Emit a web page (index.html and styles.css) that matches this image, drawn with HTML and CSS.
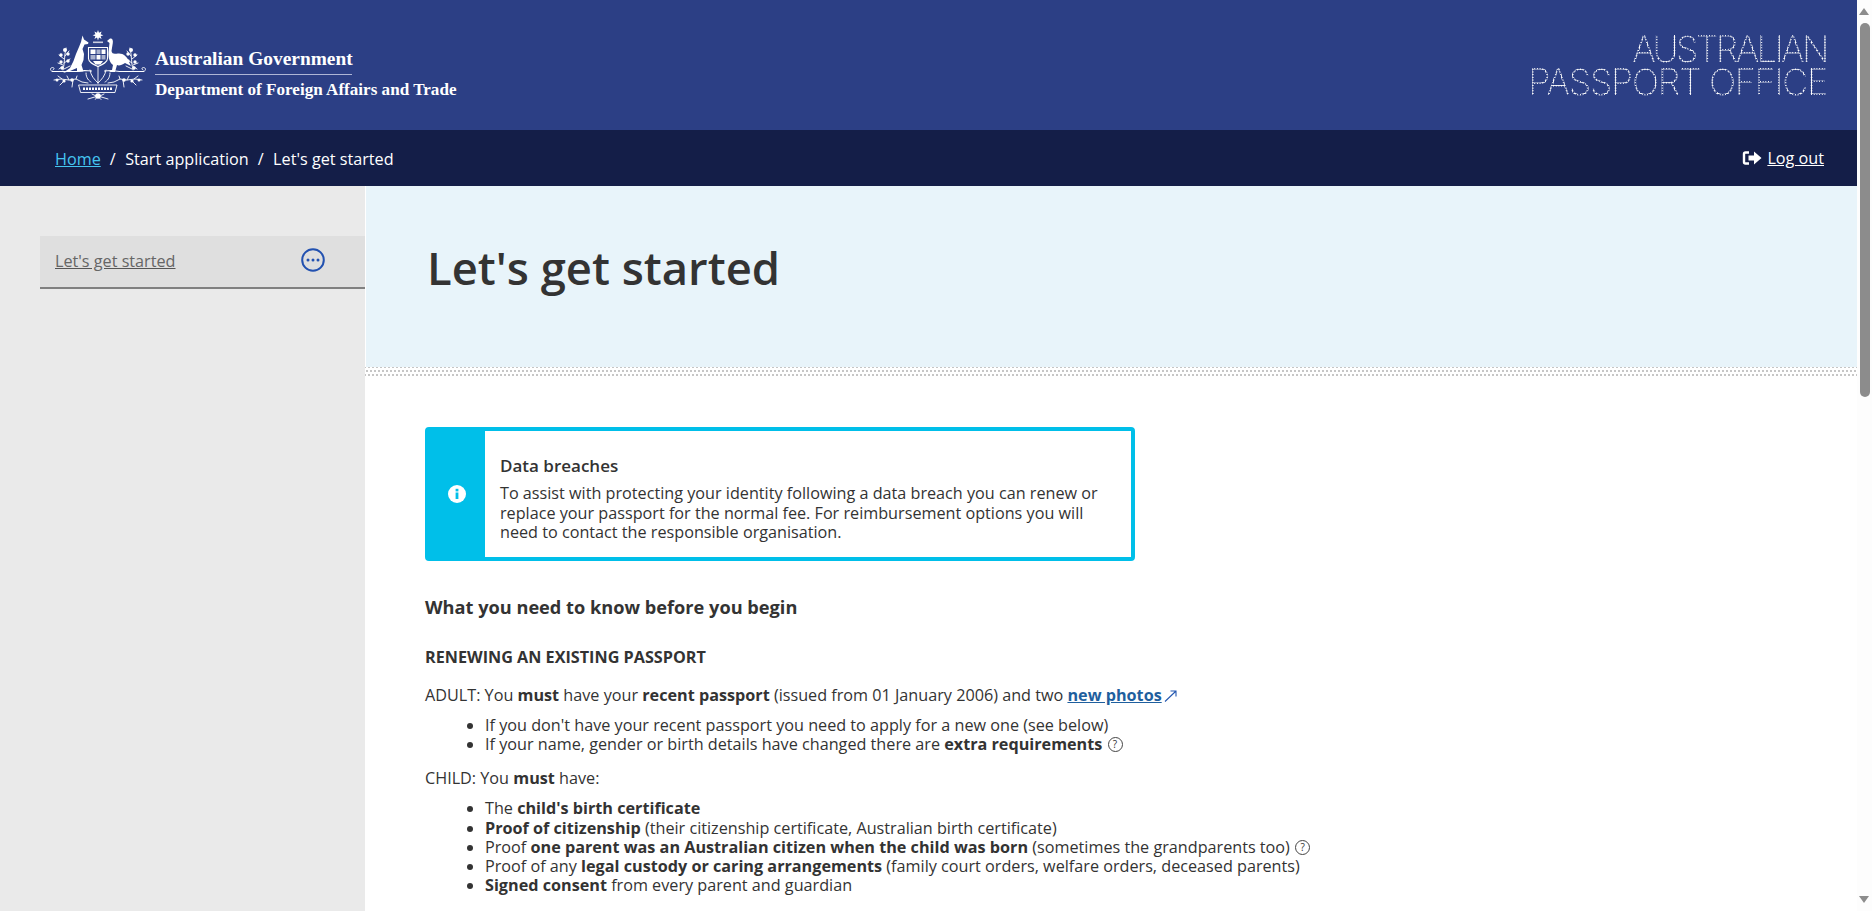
FILE: index.html
```html
<!DOCTYPE html>
<html lang="en">
<head>
<meta charset="utf-8">
<title>Let's get started - Australian Passport Office</title>
<link rel="stylesheet" href="styles.css">
</head>
<body>
<header class="masthead">
  <div class="brand">
    <svg class="crest" viewBox="0 0 96 70" width="96" height="70" aria-hidden="true">
      <g fill="#fff">
        <path d="M48 0l1 2.800 2.600-1.400-1 2.800 2.800 1-2.800 1 1 2.800L49 7.600 48 10.400 47 7.600l-2.600 1.400 1-2.800-2.800-1 2.800-1-1-2.800L47 2.800z"/>
        <rect x="43" y="11.500" width="10" height="1.600" opacity=".75"/>
        <path d="M32.500 5.500L34 9.500l4.500 3-.5 1.500-3.500.5-2 4.500 1.500 5-.5 6-2 5 2 6.500-6.500.5V38l-7 3-7 2 7-5 3.500-7 2.500-7 3-7 2-5z"/>
        <path d="M57 11l3-2.500c2.200-.5 3.300 1.500 2.800 4.500l-1.300 8c.5 3 2.500 3 6.500 2.500 5-.5 9 2.500 11 8.500l2 4-6-3c-3 2-6 3-8 2l-2 7h-6l3-2 1-5c-3-2-5-7-4.500-13l1-9z"/>
        <path d="M38.500 17.500h19v11c0 4-5 6-9.500 8-4.500-2-9.500-4-9.500-8z" fill="#2c3f85" stroke="#fff" stroke-width="1.100"/>
        <rect x="40.500" y="19.500" width="5" height="4.500"/><rect x="46.500" y="19.500" width="4" height="4.500" opacity=".6"/><rect x="51.500" y="19.500" width="4" height="4.500"/>
        <rect x="40.500" y="25" width="5" height="4.500" opacity=".6"/><rect x="46.500" y="25" width="4" height="4.500"/><rect x="51.500" y="25" width="4" height="4.500" opacity=".6"/>
        <path d="M43 31h10l-2.500 3.500h-5z"/>
      </g>
      <g fill="none" stroke="#fff" stroke-width=".9" stroke-linecap="round">
        <path d="M2.500 41.500h24l8-1 7 .5M93.500 41.500h-24l-8-1-7 .5" stroke-width="1.200"/>
        <path d="M2.500 41.500c-3-.5-2.500-4 0-4 2 0 2 2 .5 2.500M93.500 41.500c3-.5 2.500-4 0-4-2 0-2 2-.5 2.500"/>
        <path d="M48 36v17M40 40c1 6 4 9 8 13M56 40c-1 6-4 9-8 13M36 43c0 5 3 8 5 9M60 43c0 5-3 8-5 9"/>
        <path d="M4 50l7-1 8 1 7-1 6 3 6 1M92 50l-7-1-8 1-7-1-6 3-6 1"/>
        <path d="M8 46l4 3M10 55l5-5M17 46l2 4M22 57l1-7M27 46l-1 3M88 46l-4 3M86 55l-5-5M79 46l-2 4M74 57l-1-7M69 46l1 3"/>
        <path d="M13 40c2-7 1-14 3-22M9 25l5 4M19 21l-4 5M8 33l5 2M20 29l-6 4M9 39l4-3M20 36l-6 3"/>
        <path d="M83 40c-2-7-1-14-3-22M87 25l-5 4M77 21l4 5M88 33l-5 2M76 29l6 4M87 39l-4-3M76 36l6 3"/>
        <path d="M29 55h38l-2 7.500H31z"/>
        <path d="M33 58.800h30" stroke-width="2.600" stroke-dasharray="2 1" stroke-linecap="butt"/>
        <path d="M38 69l10-3 10 3M42 64l6 3 6-3M45 69.500l3-3 3 3"/>
      </g>
      <g fill="#fff">
        <circle cx="15" cy="20" r="2"/><circle cx="11" cy="25" r="1.700"/><circle cx="18" cy="24" r="1.700"/><circle cx="11" cy="32" r="1.700"/><circle cx="18" cy="31" r="1.700"/><circle cx="12" cy="38" r="1.700"/>
        <circle cx="81" cy="20" r="2"/><circle cx="85" cy="25" r="1.700"/><circle cx="78" cy="24" r="1.700"/><circle cx="85" cy="32" r="1.700"/><circle cx="78" cy="31" r="1.700"/><circle cx="84" cy="38" r="1.700"/>
        <circle cx="7" cy="50" r="1.500"/><circle cx="14" cy="51" r="1.600"/><circle cx="22" cy="50" r="1.800"/><circle cx="89" cy="50" r="1.500"/><circle cx="82" cy="51" r="1.600"/><circle cx="74" cy="50" r="1.800"/><circle cx="48" cy="66" r="2.800"/>
      </g>
    </svg>
    <div class="agency">
      <div class="gov">Australian Government</div>
      <div class="dept">Department of Foreign Affairs and Trade</div>
    </div>
  </div>
  <div class="apo"><span class="apo-top">AUSTRALIAN</span><span>PASSPORT OFFICE</span></div>
</header>
<nav class="crumbs">
  <div class="trail"><a class="home" href="#">Home</a><span class="sep">/</span><span>Start application</span><span class="sep">/</span><span>Let's get started</span></div>
  <a class="logout" href="#">
    <svg viewBox="0 0 20 16" width="20" height="16" aria-hidden="true"><path d="M7 2.500H3.500c-1 0-1.500.5-1.500 1.500v8c0 1 .5 1.500 1.500 1.500H7" fill="none" stroke="#fff" stroke-width="2.400"/><path d="M6.500 5.500H12V1.500L19.500 8 12 14.500v-4H6.500z" fill="#fff"/></svg>
    <span>Log out</span>
  </a>
</nav>
<div class="shell">
  <aside class="side">
    <div class="step">
      <a href="#">Let's get started</a>
      <svg viewBox="0 0 24 24" width="24" height="24" aria-hidden="true"><circle cx="12" cy="12" r="10.800" fill="none" stroke="#2251b0" stroke-width="2"/><g fill="#2251b0"><circle cx="7" cy="12" r="1.500"/><circle cx="12" cy="12" r="1.500"/><circle cx="17" cy="12" r="1.500"/></g></svg>
    </div>
  </aside>
  <main class="main">
    <div class="hero"><h1>Let's get started</h1></div>
    <div class="dots"></div>
    <div class="content">
      <section class="notice">
        <div class="notice-icon"><svg viewBox="0 0 18 18" width="18" height="18" aria-hidden="true"><circle cx="9" cy="9" r="9" fill="#fff"/><rect x="7.600" y="7.500" width="2.800" height="6.500" fill="#00bfe9"/><rect x="7.600" y="3.800" width="2.800" height="2.600" fill="#00bfe9"/></svg></div>
        <div class="notice-body">
          <h3>Data breaches</h3>
          <p>To assist with protecting your identity following a data breach you can renew or replace your passport for the normal fee. For reimbursement options you will need to contact the responsible organisation.</p>
        </div>
      </section>
      <h2>What you need to know before you begin</h2>
      <h4>RENEWING AN EXISTING PASSPORT</h4>
      <p class="lead">ADULT: You <b>must</b> have your <b>recent passport</b> (issued from 01 January 2006) and two <a class="ext" href="#">new photos</a><svg class="arrow" viewBox="0 0 13 12" width="13" height="12" aria-hidden="true"><path d="M1 11.500L11.500 1.500M6.500 1h5.500v5.500" fill="none" stroke="#2558b0" stroke-width="1.100"/></svg></p>
      <ul>
        <li>If you don't have your recent passport you need to apply for a new one (see below)</li>
        <li>If your name, gender or birth details have changed there are <b>extra requirements</b> <span class="q">?</span></li>
      </ul>
      <p class="lead child">CHILD: You <b>must</b> have:</p>
      <ul class="child-list">
        <li>The <b>child's birth certificate</b></li>
        <li><b>Proof of citizenship</b> (their citizenship certificate, Australian birth certificate)</li>
        <li>Proof <b>one parent was an Australian citizen when the child was born</b> (sometimes the grandparents too) <span class="q">?</span></li>
        <li>Proof of any <b>legal custody or caring arrangements</b> (family court orders, welfare orders, deceased parents)</li>
        <li><b>Signed consent</b> from every parent and guardian</li>
      </ul>
    </div>
  </main>
</div>
<div class="scrollbar" aria-hidden="true">
  <span class="scroll-up"></span>
  <span class="scroll-thumb"></span>
  <span class="scroll-down"></span>
</div>
</body>
</html>
```
FILE: styles.css
```css
* { box-sizing: border-box; }
body { margin: 0; padding-right: 15px; font-family: "Open Sans", sans-serif; font-size: 16.2px; color: #333; background: #fff; }
.masthead { height: 130px; background: #2c3f85; display: flex; justify-content: space-between; padding: 30px 30px 0 50px; }
.brand { display: flex; align-items: flex-start; }
.crest { display: block; }
.agency { margin: 17.500px 0 0 9px; color: #fff; font-family: "Liberation Serif", serif; font-weight: 700; }
.gov { font-size: 19.400px; line-height: 22px; width: 197px; padding-bottom: 4.500px; border-bottom: 1px solid #aeb6d6; white-space: nowrap; }
.dept { font-size: 17.100px; line-height: 22px; padding-top: 4px; white-space: nowrap; }
.apo { display: flex; flex-direction: column; align-items: flex-end; margin-top: 3px; font-family: "Inter", sans-serif; font-weight: 200; font-size: 36px; line-height: 33px; letter-spacing: -1.300px; background: radial-gradient(circle, #fff 0 .9px, transparent 1.200px) 0 0 / 2.700px 2.700px; -webkit-background-clip: text; background-clip: text; color: transparent; }
.apo-top { letter-spacing: -2.600px; }
.crumbs { height: 56px; background: #141e48; display: flex; justify-content: space-between; align-items: center; padding: 0 33px 0 55px; color: #fff; }
.trail { display: flex; padding-top: 2px; }
.home { color: #45c5f0; }
.sep { margin: 0 9.500px 0 9px; }
.logout { display: flex; align-items: center; gap: 5px; color: #fff; }
.shell { display: flex; min-height: 1950px; }
.side { width: 365px; flex: none; background: #eaeaea; padding: 50px 0 0 40px; }
.step { height: 53px; background: #dfdfdf; border-bottom: 2px solid #808080; display: flex; align-items: center; justify-content: space-between; padding: 0 40px 2px 15px; }
.step a { color: #666; text-decoration-color: #555; }
.step svg { margin-top: -2px; }
.main { flex: 1; min-width: 0; border-left: 1px solid #fff; }
.hero { height: 181px; background: #e8f4fa; padding: 0 61px; display: flex; align-items: center; }
h1 { margin: 0 0 19px; font-size: 45.400px; font-weight: 600; color: #333; }
.dots { height: 11px; margin-left: -1px; background-image: radial-gradient(circle, #c4c4c4 0 .7px, transparent .9px), radial-gradient(circle, #c4c4c4 0 .7px, transparent .9px); background-size: 4px 8px; background-position: 0 0, 2px 4px; }
.content { padding: 49px 59px 0; }
.notice { width: 710px; height: 134px; border: 4px solid #00bfe9; border-radius: 4px; display: flex; }
.notice-icon { width: 56px; flex: none; background: #00bfe9; display: flex; align-items: center; justify-content: center; }
.notice-body { padding: 24px 30px 0 15px; }
h3 { margin: 0 0 7px; font-size: 17px; line-height: 22px; font-weight: 600; color: #333; }
.notice-body p { margin: 0; line-height: 19.500px; }
h2 { margin: 34px 0 0; font-size: 18.200px; line-height: 24px; font-weight: 700; color: #333; }
h4 { margin: 27px 0 0; font-size: 16.200px; line-height: 22px; font-weight: 700; color: #333; }
.lead { margin: 16px 0 0; line-height: 22px; }
.child { margin-top: 13px; }
ul { margin: 9.500px 0 0; padding-left: 60px; line-height: 19.200px; }
.child-list { margin-top: 10.500px; }
b { font-weight: 700; }
.ext { color: #1f5f9e; font-weight: 700; }
.arrow { margin-left: 2px; vertical-align: -1px; }
.q { display: inline-block; width: 15px; height: 15px; border: 1px solid #444; border-radius: 50%; font-size: 10px; line-height: 13px; text-align: center; vertical-align: 2px; margin-left: 1px; }
.scrollbar { position: fixed; top: 0; right: 0; bottom: 0; width: 15px; background: #fdfdfd; }
.scroll-up, .scroll-down { position: absolute; left: 2px; width: 0; height: 0; border-left: 5px solid transparent; border-right: 5px solid transparent; }
.scroll-up { top: 8px; border-bottom: 7px solid #8c8c8c; }
.scroll-down { bottom: 8px; border-top: 7px solid #8c8c8c; }
.scroll-thumb { position: absolute; top: 23px; left: 3px; width: 10px; height: 374px; background: #8c8c8c; border-radius: 5px; }
```
